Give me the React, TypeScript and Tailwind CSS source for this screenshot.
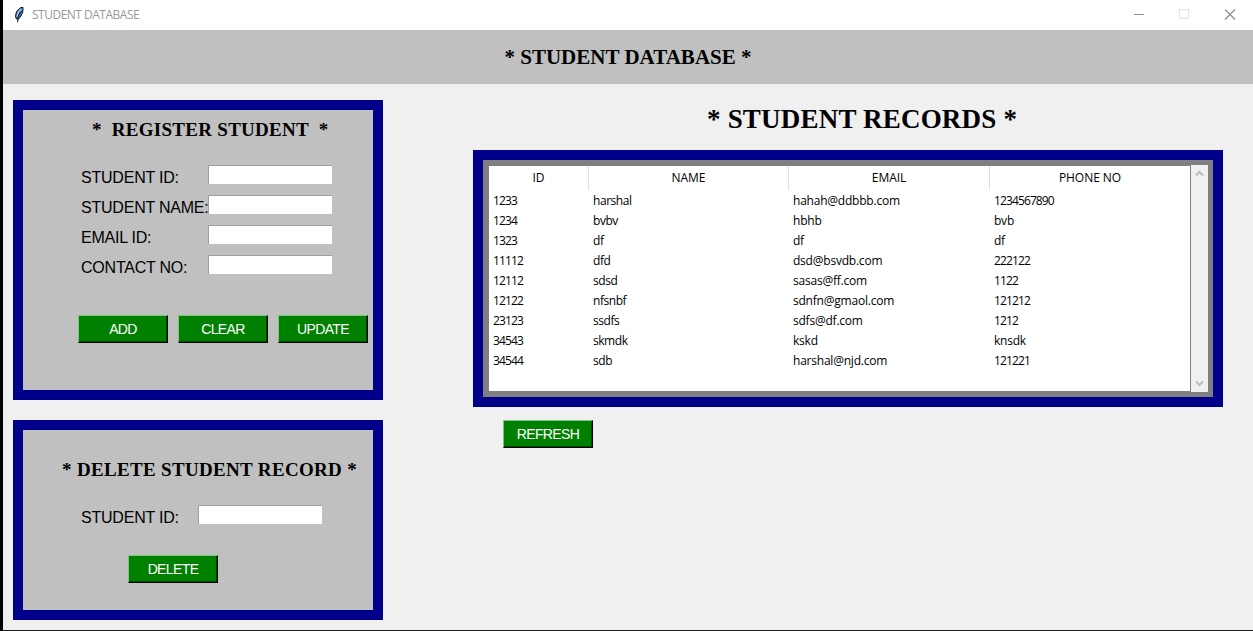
import type { ReactNode } from "react";

const ROWS = [
  ["1233", "harshal", "hahah@ddbbb.com", "1234567890"],
  ["1234", "bvbv", "hbhb", "bvb"],
  ["1323", "df", "df", "df"],
  ["11112", "dfd", "dsd@bsvdb.com", "222122"],
  ["12112", "sdsd", "sasas@ff.com", "1122"],
  ["12122", "nfsnbf", "sdnfn@gmaol.com", "121212"],
  ["23123", "ssdfs", "sdfs@df.com", "1212"],
  ["34543", "skmdk", "kskd", "knsdk"],
  ["34544", "sdb", "harshal@njd.com", "121221"],
];

const COLUMNS = "grid grid-cols-[100px_200px_201px_201px]";

function Feather() {
  return (
    <svg width="12" height="18" viewBox="0 0 12 18" className="mr-[7px]">
      <path d="M7.6 1.6 10 1.4 9.8 6 8 10 5.4 13.2 3.2 12.8 2.4 9.5 3.8 5.2Z" fill="#3f6fae" stroke="#15181f" strokeWidth="1" />
      <path d="M8.4 2.8 5.4 6.2 4 11" fill="none" stroke="#a9cbf0" strokeWidth="1.4" />
      <path d="M7.8 5.5 5.2 10 4.6 16.2" fill="none" stroke="#111" strokeWidth="1" />
    </svg>
  );
}

function TitleBar() {
  return (
    <div className="flex h-[30px] shrink-0 items-center bg-white pr-[17px] pl-[10px]">
      <Feather />
      <span className="font-['Open_Sans',sans-serif] text-[12px] tracking-[-0.5px] text-[#999]">STUDENT DATABASE</span>
      <svg className="ml-auto" width="103" height="12" viewBox="0 0 103 12" fill="none" shapeRendering="crispEdges">
        <path d="M1 5.5H11" stroke="#8e8e8e" />
        <rect x="46.5" y="0.5" width="9" height="9" stroke="#e4e4e4" />
        <path d="M92 0.5 102 10.5M102 0.5 92 10.5" stroke="#8a8a8a" strokeWidth="1.1" shapeRendering="auto" />
      </svg>
    </div>
  );
}

function Button({ children }: { children: ReactNode }) {
  return (
    <button className="flex h-7 w-[90px] items-center justify-center border border-t-[#7cc47c] border-r-black border-b-black border-l-[#7cc47c] bg-[#008000] font-['Liberation_Sans',sans-serif] text-[14px] leading-none tracking-[-0.62px] text-white shadow-[inset_-1px_-1px_0_#004a00]">
      {children}
    </button>
  );
}

function Entry() {
  return <input className="block h-[19px] w-[124px] border-t border-l border-[#a0a0a0] bg-white outline-none" />;
}

function Field({ label, wide = true }: { label: string; wide?: boolean }) {
  return (
    <div className="flex h-[30px] items-start pl-[58px]">
      <label className={`${wide ? "w-[127px]" : "w-[117px]"} pt-1 font-['Liberation_Sans',sans-serif] text-[16px] leading-[18px] tracking-[-0.22px] whitespace-nowrap text-black`}>
        {label}
      </label>
      <Entry />
    </div>
  );
}

function Chevron({ down = false }: { down?: boolean }) {
  return (
    <svg width="9" height="7" viewBox="0 0 9 7" className={down ? "rotate-180" : ""}>
      <path d="M1 5.5 4.5 2 8 5.5" fill="none" stroke="#bdbdbd" strokeWidth="2" />
    </svg>
  );
}

function Records() {
  return (
    <div className="flex h-[257px] w-[750px] border-10 border-[#00008b] bg-[#808080] pt-[5px] pr-[5px] pb-[5px] pl-[6px] font-['Open_Sans',sans-serif] text-[12px] text-black">
      <div className="mt-px mb-px w-[701px] overflow-hidden bg-white">
        <div className={`${COLUMNS} h-6 text-center leading-[24px] tracking-[-0.05px]`}>
          {["ID", "NAME", "EMAIL", "PHONE NO"].map((h) => (
            <div key={h} className="border-r border-[#e0e0e0]">{h}</div>
          ))}
        </div>
        {ROWS.map((row) => (
          <div key={row[0]} className={`${COLUMNS} h-5 leading-[21px]`}>
            {row.map((cell, i) => (
              <div key={i} className={`pl-1 ${/^\d+$/.test(cell) ? "tracking-[-0.88px]" : i === 1 ? "tracking-[-0.45px]" : "tracking-[-0.22px]"}`}>{cell}</div>
            ))}
          </div>
        ))}
      </div>
      <div className="ml-px flex w-[17px] flex-col items-center justify-between bg-[#f0f0f0] py-[5px]">
        <Chevron />
        <Chevron down />
      </div>
    </div>
  );
}

export default function App() {
  return (
    <div className="flex h-[631px] w-[1253px] flex-col overflow-hidden border-b border-l-3 border-[#1a1a1a] border-l-black bg-[#f0f0f0] font-['Liberation_Serif',serif] text-black">
      <TitleBar />
      <header className="flex h-[54px] shrink-0 items-center justify-center bg-[#c0c0c0]">
        <h1 className="text-[21px] leading-[24px] font-bold tracking-[0.02px]">* STUDENT DATABASE *</h1>
      </header>
      <main className="flex pt-4 pl-[10px]">
        <div className="flex flex-col gap-5">
          <section className="h-[300px] w-[370px] border-10 border-[#00008b] bg-[#c0c0c0] pt-2">
            <h2 className="pl-[69px] text-[19px] leading-[24px] font-bold tracking-[0.28px] whitespace-pre">{"*  REGISTER STUDENT  *"}</h2>
            <div className="pt-[23px]">
              <Field label="STUDENT ID:" />
              <Field label="STUDENT NAME:" />
              <Field label="EMAIL ID:" />
              <Field label="CONTACT NO:" />
            </div>
            <div className="flex gap-[10px] pt-[30px] pl-[55px]">
              <Button>ADD</Button>
              <Button>CLEAR</Button>
              <Button>UPDATE</Button>
            </div>
          </section>
          <section className="h-[200px] w-[370px] border-10 border-[#00008b] bg-[#c0c0c0] pt-7">
            <h2 className="pl-[39px] text-[19px] leading-[24px] font-bold tracking-[0.33px] whitespace-nowrap">* DELETE STUDENT RECORD *</h2>
            <div className="pt-[23px]">
              <Field label="STUDENT ID:" wide={false} />
            </div>
            <div className="pt-5 pl-[105px]">
              <Button>DELETE</Button>
            </div>
          </section>
        </div>
        <section className="ml-[90px]">
          <h2 className="h-[50px] pt-[3px] pl-[234px] text-[27px] leading-[32px] font-bold tracking-[0.2px]">* STUDENT RECORDS *</h2>
          <Records />
          <div className="pt-[13px] pl-[30px]">
            <Button>REFRESH</Button>
          </div>
        </section>
      </main>
    </div>
  );
}
